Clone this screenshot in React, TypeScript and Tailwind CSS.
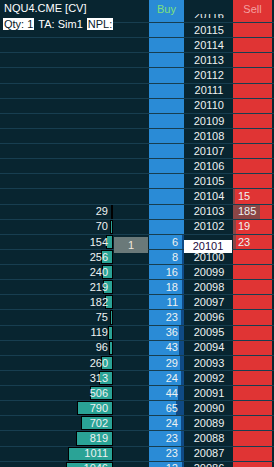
import React from 'react';

type Row = {
  price: number;
  vol?: number;
  order?: number;
  buy?: number;
  sell?: number;
  current?: boolean;
};

const rows: Row[] = [
  { price: 20115 },
  { price: 20114 },
  { price: 20113 },
  { price: 20112 },
  { price: 20111 },
  { price: 20110 },
  { price: 20109 },
  { price: 20108 },
  { price: 20107 },
  { price: 20106 },
  { price: 20105 },
  { price: 20104, sell: 15 },
  { price: 20103, vol: 29, sell: 185 },
  { price: 20102, vol: 70, sell: 19 },
  { price: 20101, vol: 154, order: 1, buy: 6, sell: 23, current: true },
  { price: 20100, vol: 256, buy: 8 },
  { price: 20099, vol: 240, buy: 16 },
  { price: 20098, vol: 219, buy: 18 },
  { price: 20097, vol: 182, buy: 11 },
  { price: 20096, vol: 75, buy: 23 },
  { price: 20095, vol: 119, buy: 36 },
  { price: 20094, vol: 96, buy: 43 },
  { price: 20093, vol: 260, buy: 29 },
  { price: 20092, vol: 313, buy: 24 },
  { price: 20091, vol: 506, buy: 44 },
  { price: 20090, vol: 790, buy: 65 },
  { price: 20089, vol: 702, buy: 24 },
  { price: 20088, vol: 819, buy: 23 },
  { price: 20087, vol: 1011, buy: 23 },
  { price: 20086, vol: 1046, buy: 12 },
];

const volWidth = (v: number) => Math.max(2, Math.round(v * 0.045));
const buyWidth = (v: number) => Math.max(2, Math.round(v / 8));
const sellWidth = (v: number) => Math.max(2, Math.round(v * 0.146));

const LadderRow: React.FC<{ row: Row }> = ({ row }) => (
  <div className="flex h-[15.14px] border-t border-[#173e50]">
    {/* volume profile */}
    <div className="relative flex w-[113px] justify-end">
      {row.vol !== undefined && (
        <>
          <div
            className="h-full border border-black bg-[#2aa396]"
            style={{ width: volWidth(row.vol) }}
          />
          <span className="absolute right-[5px] top-0 flex h-full items-center">{row.vol}</span>
        </>
      )}
    </div>

    {/* working orders */}
    <div className="relative w-[36px]">
      {row.order !== undefined && (
        <div className="absolute left-[1px] right-[1px] top-[2px] flex h-[16px] items-center justify-center bg-[#6a7979] text-[#f2e8da]">
          {row.order}
        </div>
      )}
    </div>

    {/* buy */}
    <div
      className="flex w-[35px] items-center justify-end bg-[#2a8bd6] pr-[6px]"
      style={
        row.buy !== undefined
          ? {
              background: `linear-gradient(to left, #0f4a85 ${buyWidth(row.buy)}px, #2a8bd6 ${buyWidth(row.buy)}px)`,
            }
          : undefined
      }
    >
      {row.buy}
    </div>

    {/* price */}
    <div className="relative ml-[2px] flex w-[46px] items-center justify-center">
      {row.current ? (
        <div className="absolute left-[-2px] right-0 top-[5px] flex h-[13px] items-center justify-center bg-white text-[#1e0b3e]">
          {row.price}
        </div>
      ) : (
        row.price
      )}
    </div>

    {/* sell */}
    <div
      className="ml-[1px] flex w-[39px] items-center bg-[#e03434] pl-[5px]"
      style={
        row.sell !== undefined
          ? {
              background: `linear-gradient(to right, #8a4646 ${sellWidth(row.sell)}px, #e03434 ${sellWidth(row.sell)}px)`,
            }
          : undefined
      }
    >
      {row.sell}
    </div>
  </div>
);

const App: React.FC = () => {
  return (
    <div className="relative h-[467px] w-[274px] overflow-hidden bg-[#082530] font-['Liberation_Sans',Arial,sans-serif] text-[11px] text-[#eef2f2]">
      <div className="flex h-[22px]">
        <div className="w-[113px]" />
        <div className="w-[36px]" />
        <div className="w-[35px] bg-[#2a8bd6] pt-[2px] text-center leading-[14px] text-[#7ee07e]">Buy</div>
        <div className="relative ml-[2px] w-[46px]">
          <div className="absolute left-0 right-0 top-[14px] h-[4px] overflow-hidden text-center">
            <div className="mt-[-6px] leading-[15px]">20116</div>
          </div>
        </div>
        <div className="ml-[1px] w-[39px] bg-[#e03434] pt-[2px] text-center leading-[14px] text-[#f4a0a0]">Sell</div>
      </div>

      {rows.map((row) => (
        <LadderRow key={row.price} row={row} />
      ))}

      {/* instrument / account labels */}
      <div className="absolute left-0 top-0 flex flex-col whitespace-nowrap">
        <div className="h-[18px] pl-[4px] leading-[16px] text-white">NQU4.CME [CV]</div>
        <div className="flex h-[12px] items-start gap-[4px] bg-[#082530] pl-[3px] leading-[12px]">
          <span className="shrink-0 bg-white px-[1px] text-[#0a1a2a]">Qty: 1</span>
          <span className="shrink-0 text-white">TA: Sim1</span>
          <span className="shrink-0 bg-white px-[1px] text-[#0a1a2a]">NPL:</span>
        </div>
      </div>
    </div>
  );
};

export default App;
